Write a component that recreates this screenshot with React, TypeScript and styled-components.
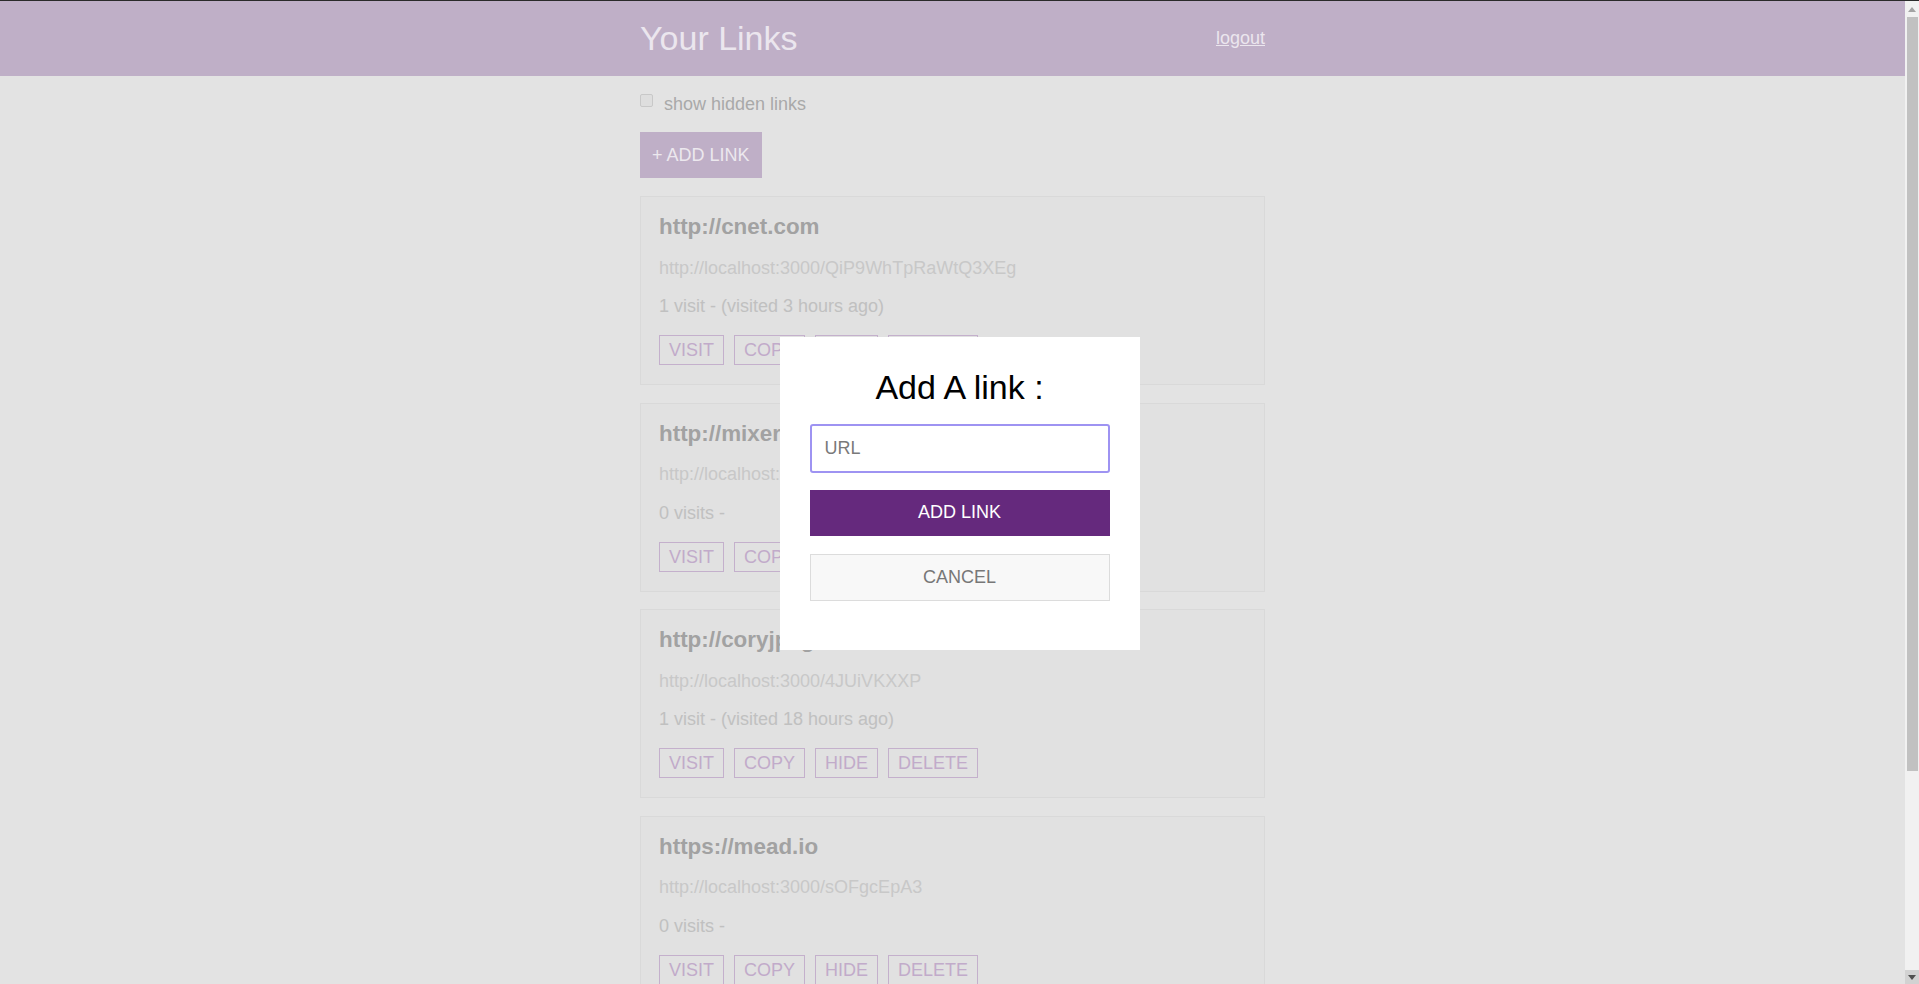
import React from "react";
import styled, { createGlobalStyle } from "styled-components";

const GlobalStyle = createGlobalStyle`
  html, body {
    margin: 0;
    padding: 0;
    overflow: hidden;
  }
  body {
    background: #e3e3e3;
    font-family: "Liberation Sans", Arial, sans-serif;
    border-top: 1px solid #2a2a2a;
  }
  * { box-sizing: border-box; }
`;

const Shell = styled.div`
  display: flex;
  height: calc(100vh - 1px);
`;

const Viewport = styled.div`
  flex: 1;
  min-width: 0;
  overflow: hidden;
`;

const ScrollTrack = styled.div`
  width: 14px;
  flex: none;
  background: #f1f1f1;
  display: flex;
  flex-direction: column;
`;

const ScrollArrow = styled.div<{ $down?: boolean }>`
  height: ${(p) => (p.$down ? "14px" : "16px")};
  flex: none;
  display: flex;
  align-items: center;
  justify-content: center;
  background: ${(p) => (p.$down ? "#d2d2d2" : "transparent")};
  margin-top: ${(p) => (p.$down ? "auto" : "0")};
`;

const ScrollThumb = styled.div`
  height: 754px;
  margin: 0 1px 0 2px;
  background: #c1c1c1;
`;

const Header = styled.header`
  background: #bfafc7;
  height: 75px;
`;

const HeaderInner = styled.div`
  max-width: 625px;
  height: 100%;
  margin: 0 auto;
  display: flex;
  align-items: center;
  justify-content: space-between;
`;

const HeaderTitle = styled.h1`
  margin: 0;
  font-size: 34px;
  font-weight: 400;
  color: #ebe6ee;
`;

const Logout = styled.a`
  font-size: 18px;
  color: #ebe6ee;
  text-decoration: underline;
  cursor: pointer;
`;

const Page = styled.main`
  max-width: 625px;
  margin: 0 auto;
  padding: 18px 0 32px;
`;

const CheckRow = styled.label`
  display: block;
  padding-left: 1px;
  font-size: 18px;
  line-height: 21px;
  color: #a9a9a9;
`;

const CheckBox = styled.input`
  appearance: none;
  width: 13px;
  height: 13px;
  margin: 0 11px 3px -1px;
  border: 1px solid #c8c8c8;
  border-radius: 2px;
  background: #dedede;
`;

const AddButton = styled.button`
  display: block;
  margin: 17px 0 18px;
  height: 46px;
  padding: 0 12px;
  border: none;
  background: #bfafc7;
  color: #ece8ee;
  font-family: inherit;
  font-size: 18px;
`;

const CardList = styled.div`
  display: flex;
  flex-direction: column;
  gap: 17.5px;
`;

const Card = styled.section`
  background: #e1e1e1;
  border: 1px solid #d9d9d9;
  padding: 17px 17px 19px 18px;
`;

const CardTitle = styled.h2`
  margin: 0;
  font-size: 22.4px;
  line-height: 26px;
  font-weight: 700;
  color: #a2a2a2;
`;

const ShortUrl = styled.p`
  margin: 17.5px 0 0;
  font-size: 18px;
  line-height: 20px;
  color: #c8c8c8;
`;

const Meta = styled.p`
  margin: 18.5px 0 0;
  font-size: 18px;
  line-height: 20px;
  color: #c0c0c0;
`;

const Actions = styled.div`
  display: flex;
  gap: 10px;
  margin-top: 19px;
`;

const ActionButton = styled.button`
  height: 30px;
  padding: 0 9px;
  border: 1px solid #c4b0cc;
  background: transparent;
  color: #c1abca;
  font-family: inherit;
  font-size: 18px;
  line-height: 28px;
`;

const Overlay = styled.div`
  position: fixed;
  top: 1px;
  left: 0;
  width: 100vw;
  height: 100vh;
  display: flex;
  align-items: center;
  justify-content: center;
`;

const Modal = styled.div`
  width: 360px;
  background: #ffffff;
  padding: 31px 30px 48.5px;
  display: flex;
  flex-direction: column;
`;

const ModalTitle = styled.h1`
  margin: 0 0 17px;
  font-size: 34px;
  line-height: 39px;
  font-weight: 400;
  color: #000;
  text-align: center;
`;

const UrlInput = styled.input`
  width: 100%;
  height: 49px;
  padding: 0 13px;
  border: 2px solid #9e93f2;
  border-radius: 3px;
  outline: none;
  font-family: inherit;
  font-size: 18px;
  color: #333;
  &::placeholder {
    color: #7a7a7a;
  }
`;

const ModalButton = styled.button<{ $primary?: boolean }>`
  width: 100%;
  height: ${(p) => (p.$primary ? "46px" : "47px")};
  margin-top: ${(p) => (p.$primary ? "17px" : "18.5px")};
  border: ${(p) => (p.$primary ? "none" : "1px solid #dcdcdc")};
  background: ${(p) => (p.$primary ? "#65297d" : "#f8f8f8")};
  color: ${(p) => (p.$primary ? "#ffffff" : "#777777")};
  font-family: inherit;
  font-size: 18px;
`;

type LinkItem = { url: string; short: string; meta: string };

const links: LinkItem[] = [
  { url: "http://cnet.com", short: "http://localhost:3000/QiP9WhTpRaWtQ3XEg", meta: "1 visit - (visited 3 hours ago)" },
  { url: "http://mixer.com", short: "http://localhost:3000/Xk2mPq8LzR", meta: "0 visits -" },
  { url: "http://coryjpage.com", short: "http://localhost:3000/4JUiVKXXP", meta: "1 visit - (visited 18 hours ago)" },
  { url: "https://mead.io", short: "http://localhost:3000/sOFgcEpA3", meta: "0 visits -" },
  { url: "http://google.com", short: "http://localhost:3000/hT7wQe2Bn", meta: "0 visits -" },
];

export default function App() {
  return (
    <>
      <GlobalStyle />
      <Shell>
        <Viewport>
          <Header>
            <HeaderInner>
              <HeaderTitle>Your Links</HeaderTitle>
              <Logout>logout</Logout>
            </HeaderInner>
          </Header>
          <Page>
            <CheckRow>
              <CheckBox type="checkbox" />
              show hidden links
            </CheckRow>
            <AddButton>+ ADD LINK</AddButton>
            <CardList>
              {links.map((l) => (
                <Card key={l.url}>
                  <CardTitle>{l.url}</CardTitle>
                  <ShortUrl>{l.short}</ShortUrl>
                  <Meta>{l.meta}</Meta>
                  <Actions>
                    <ActionButton>VISIT</ActionButton>
                    <ActionButton>COPY</ActionButton>
                    <ActionButton>HIDE</ActionButton>
                    <ActionButton>DELETE</ActionButton>
                  </Actions>
                </Card>
              ))}
            </CardList>
          </Page>
        </Viewport>
        <ScrollTrack>
          <ScrollArrow>
            <svg width="8" height="5" viewBox="0 0 8 5">
              <polygon points="0,5 4,0 8,5" fill="#a3a3a3" />
            </svg>
          </ScrollArrow>
          <ScrollThumb />
          <ScrollArrow $down>
            <svg width="8" height="5" viewBox="0 0 8 5">
              <polygon points="0,0 8,0 4,5" fill="#505050" />
            </svg>
          </ScrollArrow>
        </ScrollTrack>
      </Shell>
      <Overlay>
        <Modal>
          <ModalTitle>Add A link :</ModalTitle>
          <UrlInput placeholder="URL" autoFocus />
          <ModalButton $primary>ADD LINK</ModalButton>
          <ModalButton>CANCEL</ModalButton>
        </Modal>
      </Overlay>
    </>
  );
}
